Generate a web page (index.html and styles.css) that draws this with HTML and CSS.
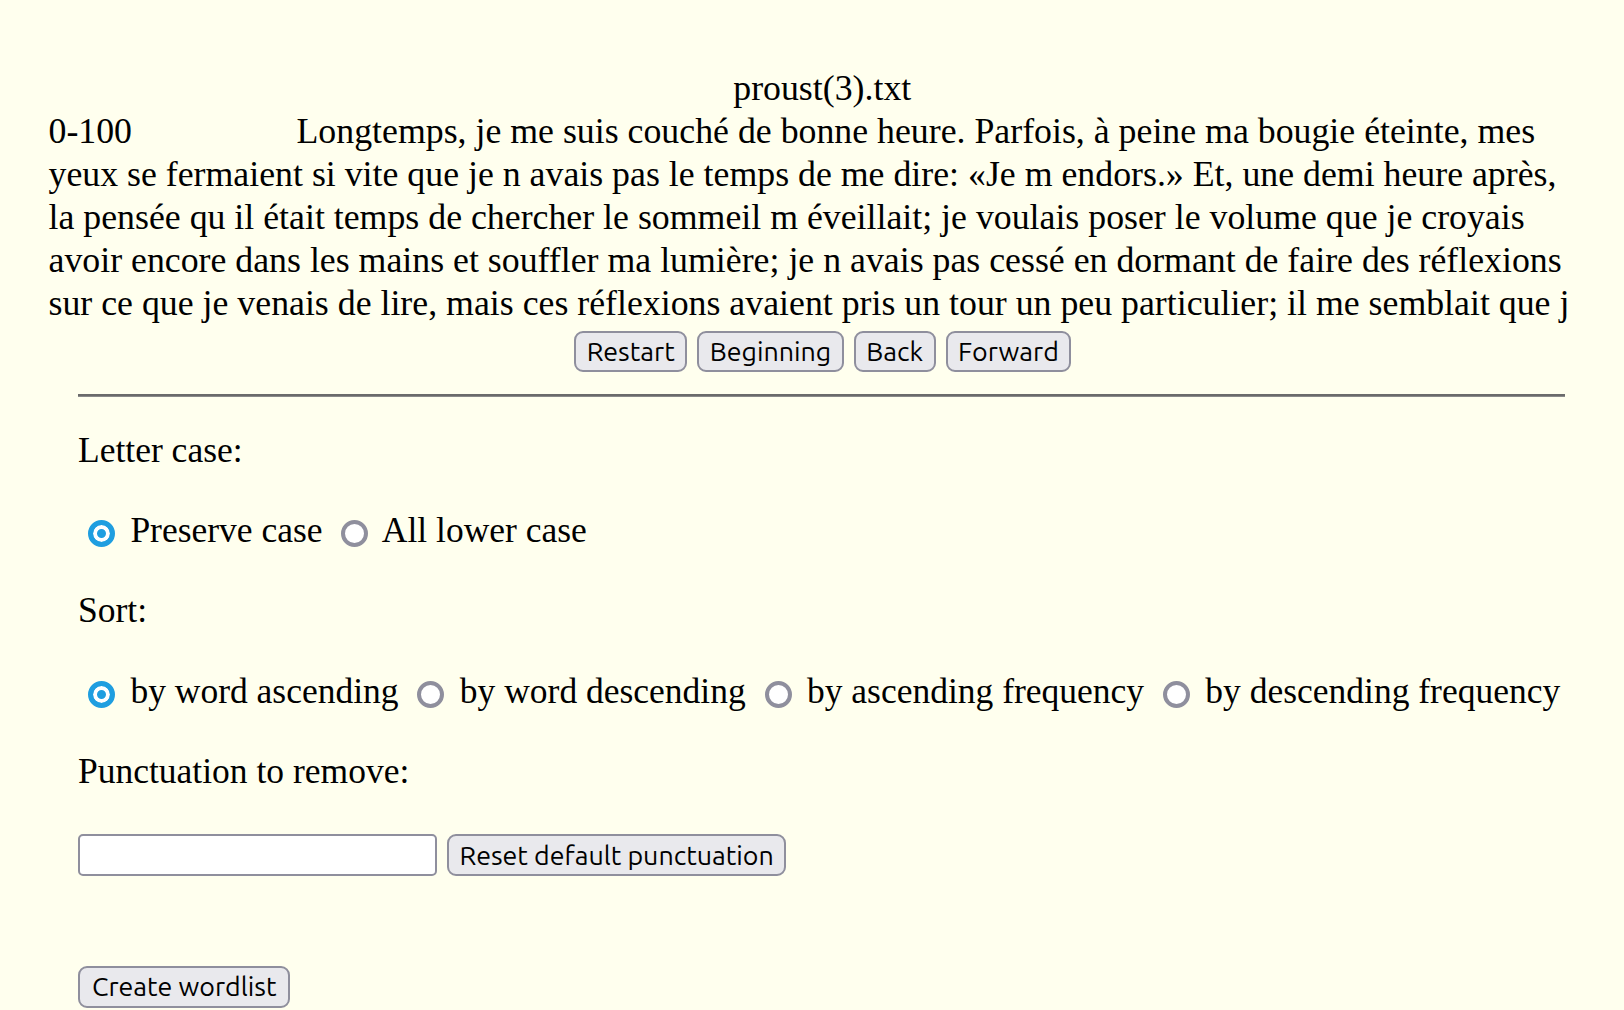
FILE: index.html
```html
<!DOCTYPE html>
<html lang="fr">
<head>
<meta charset="utf-8">
<title>Wordlist</title>
<link rel="stylesheet" href="styles.css">
</head>
<body>
<div class="reader">
  <div class="title">proust(3).txt</div>
  <div class="passage"><span class="range">0-100</span>Longtemps, je me suis couché de bonne heure. Parfois, à peine ma bougie éteinte, mes yeux se fermaient si vite que je n avais pas le temps de me dire: «Je m endors.» Et, une demi heure après, la pensée qu il était temps de chercher le sommeil m éveillait; je voulais poser le volume que je croyais avoir encore dans les mains et souffler ma lumière; je n avais pas cessé en dormant de faire des réflexions sur ce que je venais de lire, mais ces réflexions avaient pris un tour un peu particulier; il me semblait que j</div>
  <div class="nav">
    <button type="button" class="btn">Restart</button>
    <button type="button" class="btn">Beginning</button>
    <button type="button" class="btn">Back</button>
    <button type="button" class="btn">Forward</button>
  </div>
</div>
<form class="options">
  <hr class="rule">
  <p class="label first">Letter case:</p>
  <p class="choices"><label><input type="radio" name="case" class="radio" checked> Preserve case</label> <label><input type="radio" name="case" class="radio"> All lower case</label></p>
  <p class="label">Sort:</p>
  <p class="choices"><label><input type="radio" name="sort" class="radio" checked> by word ascending</label> <label><input type="radio" name="sort" class="radio"> by word descending</label> <label><input type="radio" name="sort" class="radio"> by ascending frequency</label> <label><input type="radio" name="sort" class="radio"> by descending frequency</label></p>
  <p class="label">Punctuation to remove:</p>
  <div class="punct">
    <input type="text" class="field">
    <button type="button" class="btn">Reset default punctuation</button>
  </div>
  <div class="submit">
    <button type="button" class="btn">Create wordlist</button>
  </div>
</form>
</body>
</html>
```

FILE: styles.css
```css
html, body {
  margin: 0;
  padding: 0;
}

body {
  background: #ffffee;
  color: #000;
  font-family: "Liberation Serif", "Times New Roman", serif;
  font-size: 35.8px;
  line-height: 43px;
}

.reader {
  padding: 66.5px 46px 0 48.5px;
}

.title {
  text-align: center;
  padding-left: 18px;
}

.passage {
  margin: 0;
}

.range {
  display: inline-block;
  width: 248px;
}

.nav {
  display: flex;
  justify-content: center;
  gap: 10px;
  padding-top: 6px;
  padding-left: 19px;
}

.btn {
  box-sizing: border-box;
  height: 41.5px;
  padding: 0 10.5px;
  margin: 0;
  border: 2px solid #8f8f9d;
  border-radius: 9px;
  background: #e9e9ed;
  color: #000;
  font-family: "Ubuntu", "Open Sans", sans-serif;
  font-size: 26.8px;
  line-height: 1;
  display: inline-flex;
  align-items: center;
  justify-content: center;
}

.options {
  padding: 0 40px 0 78px;
  margin: 0;
  font-size: 35.5px;
}

.rule {
  margin: 22px 19px 0 0;
  height: 0;
  border: none;
  border-top: 2px solid #6b6b6b;
  border-bottom: 1px solid #8a8a8a;
}

.options p {
  margin: 0 0 37.4px;
}

.options p.first {
  margin-top: 31.6px;
}

.choices {
  white-space: nowrap;
}

.radio {
  -webkit-appearance: none;
  appearance: none;
  box-sizing: border-box;
  width: 27px;
  height: 27px;
  margin: 0 6.5px 0 10px;
  border: 4px solid #8f8f9d;
  border-radius: 50%;
  background: #fff;
  vertical-align: middle;
}

.radio:checked {
  border: 5px solid #1f9ee0;
  background: #1f9ee0;
  box-shadow: inset 0 0 0 4px #fff;
}

.punct {
  display: flex;
  align-items: center;
  gap: 10px;
  margin-top: 41px;
}

.field {
  box-sizing: border-box;
  width: 359px;
  height: 42px;
  margin: 0;
  border: 2px solid #8f8f9d;
  border-radius: 5px;
  background: #fff;
  font-family: "Ubuntu", sans-serif;
  font-size: 26.8px;
}

.punct .btn {
  height: 42px;
}

.submit {
  margin-top: 87px;
}

.submit .btn {
  height: 42px;
  padding: 0 12px;
}
```
